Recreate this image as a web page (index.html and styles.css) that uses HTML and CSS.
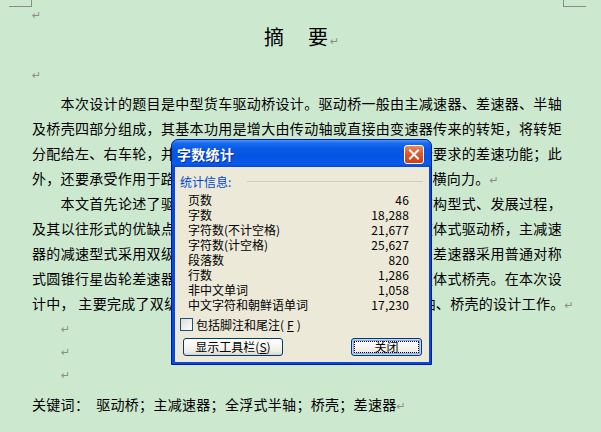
FILE: index.html
```html
<!DOCTYPE html>
<html lang="zh-CN">

<head>
	<meta charset="UTF-8">
	<title>摘要 - 字数统计</title>
	<link rel="stylesheet" href="styles.css">
</head>

<body>
	<div class="marks">
		<div class="mark left"></div>
		<div class="mark right"></div>
	</div>

	<div class="doc">
		<p class="blank top"><span class="pm">↵</span></p>
		<h1 class="title">摘　要<span class="pm tail">↵</span></h1>
		<p class="blank mid"><span class="pm">↵</span></p>

		<p class="para">
			<span class="ln first">本次设计的题目是中型货车驱动桥设计。驱动桥一般由主减速器、差速器、半轴</span>
			<span class="ln">及桥壳四部分组成，其基本功用是增大由传动轴或直接由变速器传来的转矩，将转矩</span>
			<span class="ln">分配给左、右车轮，并使左、右驱动车轮具有汽车行驶运动学所要求的差速功能；此</span>
			<span class="ln end">外，还要承受作用于路面和车架或车身之间的垂直力、纵向力和横向力。<span class="pm">↵</span></span>
		</p>
		<p class="para">
			<span class="ln first">本文首先论述了驱动桥的基本功用、组成和分类以及各种结构型式、发展过程，</span>
			<span class="ln">及其以往形式的优缺点，然后确定了本次设计所采用的结构为整体式驱动桥，主减速</span>
			<span class="ln">器的减速型式采用双级主减速器，主动锥齿轮采用悬臂式支承，差速器采用普通对称</span>
			<span class="ln">式圆锥行星齿轮差速器，半轴为全浮式，桥壳为钢板冲压焊接整体式桥壳。在本次设</span>
			<span class="ln end">计中， 主要完成了双级主减速器、行星齿轮差速器、全浮式半轴、桥壳的设计工作。<span class="pm">↵</span></span>
		</p>

		<p class="blank gap"><span class="pm">↵</span></p>
		<p class="blank gap"><span class="pm">↵</span></p>
		<p class="blank gap"><span class="pm">↵</span></p>

		<p class="keys">关键词：<span class="key-list">驱动桥；主减速器；全浮式半轴；桥壳；差速器</span><span class="pm">↵</span></p>
	</div>

	<!-- word count dialog -->
	<div class="dlg">
		<div class="dlg-bar">
			<span class="dlg-title">字数统计</span>
			<span class="dlg-close">
				<svg width="18" height="17" viewBox="0 0 18 17">
					<path d="M5 4.5 L13 12.5 M13 4.5 L5 12.5" stroke="#fff" stroke-width="2" stroke-linecap="square" />
				</svg>
			</span>
		</div>
		<div class="dlg-body">
			<div class="grp">
				<span class="grp-name">统计信息:</span>
				<span class="rule"></span>
			</div>
			<div class="stats">
				<div class="row"><span>页数</span><span class="num">46</span></div>
				<div class="row"><span>字数</span><span class="num">18,288</span></div>
				<div class="row"><span>字符数(不计空格)</span><span class="num">21,677</span></div>
				<div class="row"><span>字符数(计空格)</span><span class="num">25,627</span></div>
				<div class="row"><span>段落数</span><span class="num">820</span></div>
				<div class="row"><span>行数</span><span class="num">1,286</span></div>
				<div class="row"><span>非中文单词</span><span class="num">1,058</span></div>
				<div class="row"><span>中文字符和朝鲜语单词</span><span class="num">17,230</span></div>
			</div>
			<label class="check"><span class="box"></span>包括脚注和尾注(<u>F</u>)</label>
			<div class="actions">
				<button class="btn wide">显示工具栏(<u>S</u>)</button>
				<button class="btn default"><span class="focus">关闭</span></button>
			</div>
		</div>
	</div>
</body>

</html>
```

FILE: styles.css
```css
html,
body {
	margin: 0;
}

body {
	position: relative;
	width: 601px;
	height: 432px;
	overflow: hidden;
	background: #cce8cf;
	color: #000;
	font-family: "Noto Sans CJK SC", sans-serif;
}

/* page corner marks */
.marks {
	display: flex;
	justify-content: space-between;
	margin: 0 15px 0 9px;
}

.mark {
	width: 22px;
	height: 6px;
	border-bottom: 1px solid #8a8a8a;
}

.mark.left {
	border-right: 1px solid #8a8a8a;
}

.mark.right {
	border-left: 1px solid #8a8a8a;
}

.doc {
	margin-left: 32px;
	width: 530px;
	font-size: 14px;
	letter-spacing: 0.3px;
	text-spacing-trim: space-all;
}

.doc p,
.doc h1 {
	margin: 0;
}

/* paragraph marks must not stretch the line box */
.pm {
	color: #8c8c8c;
	font-family: "DejaVu Sans", sans-serif;
	font-size: 11px;
	line-height: 0;
	letter-spacing: 0;
}

.pm.tail {
	display: inline-block;
	width: 0;
}

.blank.top {
	line-height: 12px;
}

.title {
	margin-top: 5px !important;
	font-size: 20px;
	font-weight: normal;
	line-height: 25px;
	text-align: center;
	letter-spacing: 2px;
}

.blank.mid {
	margin-top: 12px !important;
	line-height: 25px;
}

.blank.mid + .para {
	margin-top: 5px;
}

.para {
	line-height: 25px;
}

.ln {
	display: block;
	white-space: nowrap;
	text-align: justify;
	text-align-last: justify;
}

.ln.first {
	padding-left: 28.6px;
}

.ln.end {
	text-align-last: left;
}

.blank.gap {
	line-height: 23px;
	padding-left: 29px;
}

.keys {
	margin-top: 7px !important;
	line-height: 25px;
}

.key-list {
	margin-left: 7px;
}

/* dialog */
.dlg {
	position: absolute;
	left: 171px;
	top: 139px;
	width: 261px;
	height: 226px;
	box-sizing: border-box;
	display: flex;
	flex-direction: column;
	padding: 0 2px 2px 3px;
	background: #0a48dc;
	border: 1px solid #001c9c;
	border-radius: 7px 7px 0 0;
	font-size: 12px;
}

.dlg-bar {
	height: 27px;
	margin: 0 -2px 0 -3px;
	padding: 0 7px 0 5px;
	display: flex;
	align-items: center;
	justify-content: space-between;
	border-radius: 6px 6px 0 0;
	background: linear-gradient(#4a96fa 0, #1a6cf0 3px, #0858e6 9px, #0454e2 60%, #0a5bea 88%, #0847d2 100%);
}

.dlg-title {
	color: #fff;
	font-size: 14px;
	font-weight: bold;
	letter-spacing: 0.3px;
	text-shadow: 1px 1px 0 #0a2a96;
}

.dlg-close {
	display: flex;
	width: 18px;
	height: 17px;
	margin-top: 1px;
	border: 1px solid #fff;
	border-radius: 3px;
	background: linear-gradient(#ec8a62, #e0562c 45%, #cc3f18);
}

.dlg-body {
	flex: 1;
	padding: 7px 20px 6px 5px;
	background: #ece9d8;
}

.grp {
	display: flex;
	align-items: center;
	gap: 16px;
	line-height: 15px;
}

.grp-name {
	color: #0046d5;
}

.rule {
	flex: 1;
	height: 1px;
	margin-right: -14px;
	background: #cfcdbf;
}

.stats {
	margin: 3px 0 0 8px;
}

.row {
	display: flex;
	justify-content: space-between;
	line-height: 15px;
}

.num {
	letter-spacing: 0.2px;
}

.check {
	display: flex;
	align-items: center;
	gap: 3px;
	height: 13px;
	margin-top: 5.5px;
	line-height: 13px;
}

.box {
	width: 11px;
	height: 11px;
	border: 1px solid #1c5180;
	background: linear-gradient(135deg, #dcdcd7, #fff);
}

.actions {
	display: flex;
	justify-content: space-between;
	margin: 7px -13px 0 3px;
}

.btn {
	box-sizing: border-box;
	height: 18px;
	padding: 0;
	border: 1px solid #003c74;
	border-radius: 3px;
	background: linear-gradient(#fff, #f6f5f0 45%, #ecebe4 80%, #d8d4ca);
	color: #000;
	font: 12px "Noto Sans CJK SC", sans-serif;
	line-height: 15px;
	text-align: center;
}

.btn.wide {
	width: 100px;
}

.btn.default {
	width: 71px;
	box-shadow: inset 0 0 0 1px #c0d3f8, inset 0 0 0 2px #8aa9ee;
}

.focus {
	display: block;
	height: 10px;
	margin: 0 2px;
	border: 1px dotted #000;
	line-height: 10px;
}
```
